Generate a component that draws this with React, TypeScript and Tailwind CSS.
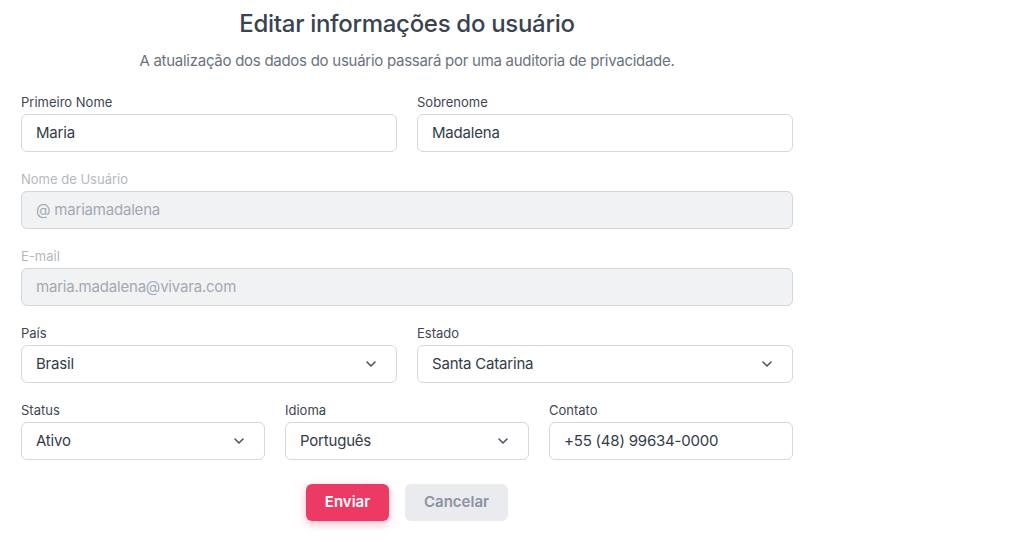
import { ReactNode } from "react";

const font = { fontFamily: "Inter, 'Noto Sans', 'Liberation Sans', sans-serif" };

const Chevron = () => (
  <svg width="10" height="6" viewBox="0 0 10 6" fill="none" className="shrink-0">
    <path d="M1 1l4 4 4-4" stroke="#4b5563" strokeWidth="1.6" strokeLinecap="round" strokeLinejoin="round" />
  </svg>
);

const Field = ({
  label,
  value,
  disabled,
  select,
}: {
  label: string;
  value: ReactNode;
  disabled?: boolean;
  select?: boolean;
}) => (
  <div className="flex flex-col min-w-0">
    <label
      className={`text-[13px] leading-[18px] mb-[3px] ${disabled ? "text-[#b3b8c0]" : "text-[#3f4652]"}`}
    >
      {label}
    </label>
    <div
      className={`h-[38px] rounded-md border flex items-center justify-between pl-[14px] pr-[20px] text-[15px] tracking-[-0.2px] ${
        disabled
          ? "bg-[#f1f2f4] border-[#d3d6db] text-[#a3a9b2]"
          : "bg-white border-[#d5d8dd] text-[#333c48]"
      }`}
    >
      <span className="truncate">{value}</span>
      {select && <Chevron />}
    </div>
  </div>
);

export default function App() {
  return (
    <div className="min-h-screen bg-white" style={font}>
      <form className="ml-[21px] w-[772px] pt-[8px] flex flex-col">
        <h1 className="text-center text-[24px] leading-[32px] font-medium tracking-[-0.3px] text-[#3a4350]">
          Editar informações do usuário
        </h1>
        <p className="mt-[11px] text-center text-[15px] leading-[20px] tracking-[-0.27px] text-[#6b7280]">
          A atualização dos dados do usuário passará por uma auditoria de privacidade.
        </p>

        <div className="mt-[22px] flex flex-col gap-[18px]">
          <div className="grid grid-cols-2 gap-5">
            <Field label="Primeiro Nome" value="Maria" />
            <Field label="Sobrenome" value="Madalena" />
          </div>
          <Field label="Nome de Usuário" value="@ mariamadalena" disabled />
          <Field label="E-mail" value="maria.madalena@vivara.com" disabled />
          <div className="grid grid-cols-2 gap-5">
            <Field label="País" value="Brasil" select />
            <Field label="Estado" value="Santa Catarina" select />
          </div>
          <div className="grid grid-cols-3 gap-5">
            <Field label="Status" value="Ativo" select />
            <Field label="Idioma" value="Português" select />
            <Field label="Contato" value="+55 (48) 99634-0000" />
          </div>
        </div>

        <div className="mt-6 flex justify-center gap-4">
          <button
            type="button"
            className="h-[37px] w-[83px] rounded-md bg-[#ec3a64] text-white text-[15px] font-semibold shadow-[0_3px_8px_rgba(236,58,100,0.35)]"
          >
            Enviar
          </button>
          <button
            type="button"
            className="h-[37px] w-[103px] rounded-md bg-[#e9ebee] text-[#8993a1] text-[15px] font-semibold"
          >
            Cancelar
          </button>
        </div>
      </form>
    </div>
  );
}
